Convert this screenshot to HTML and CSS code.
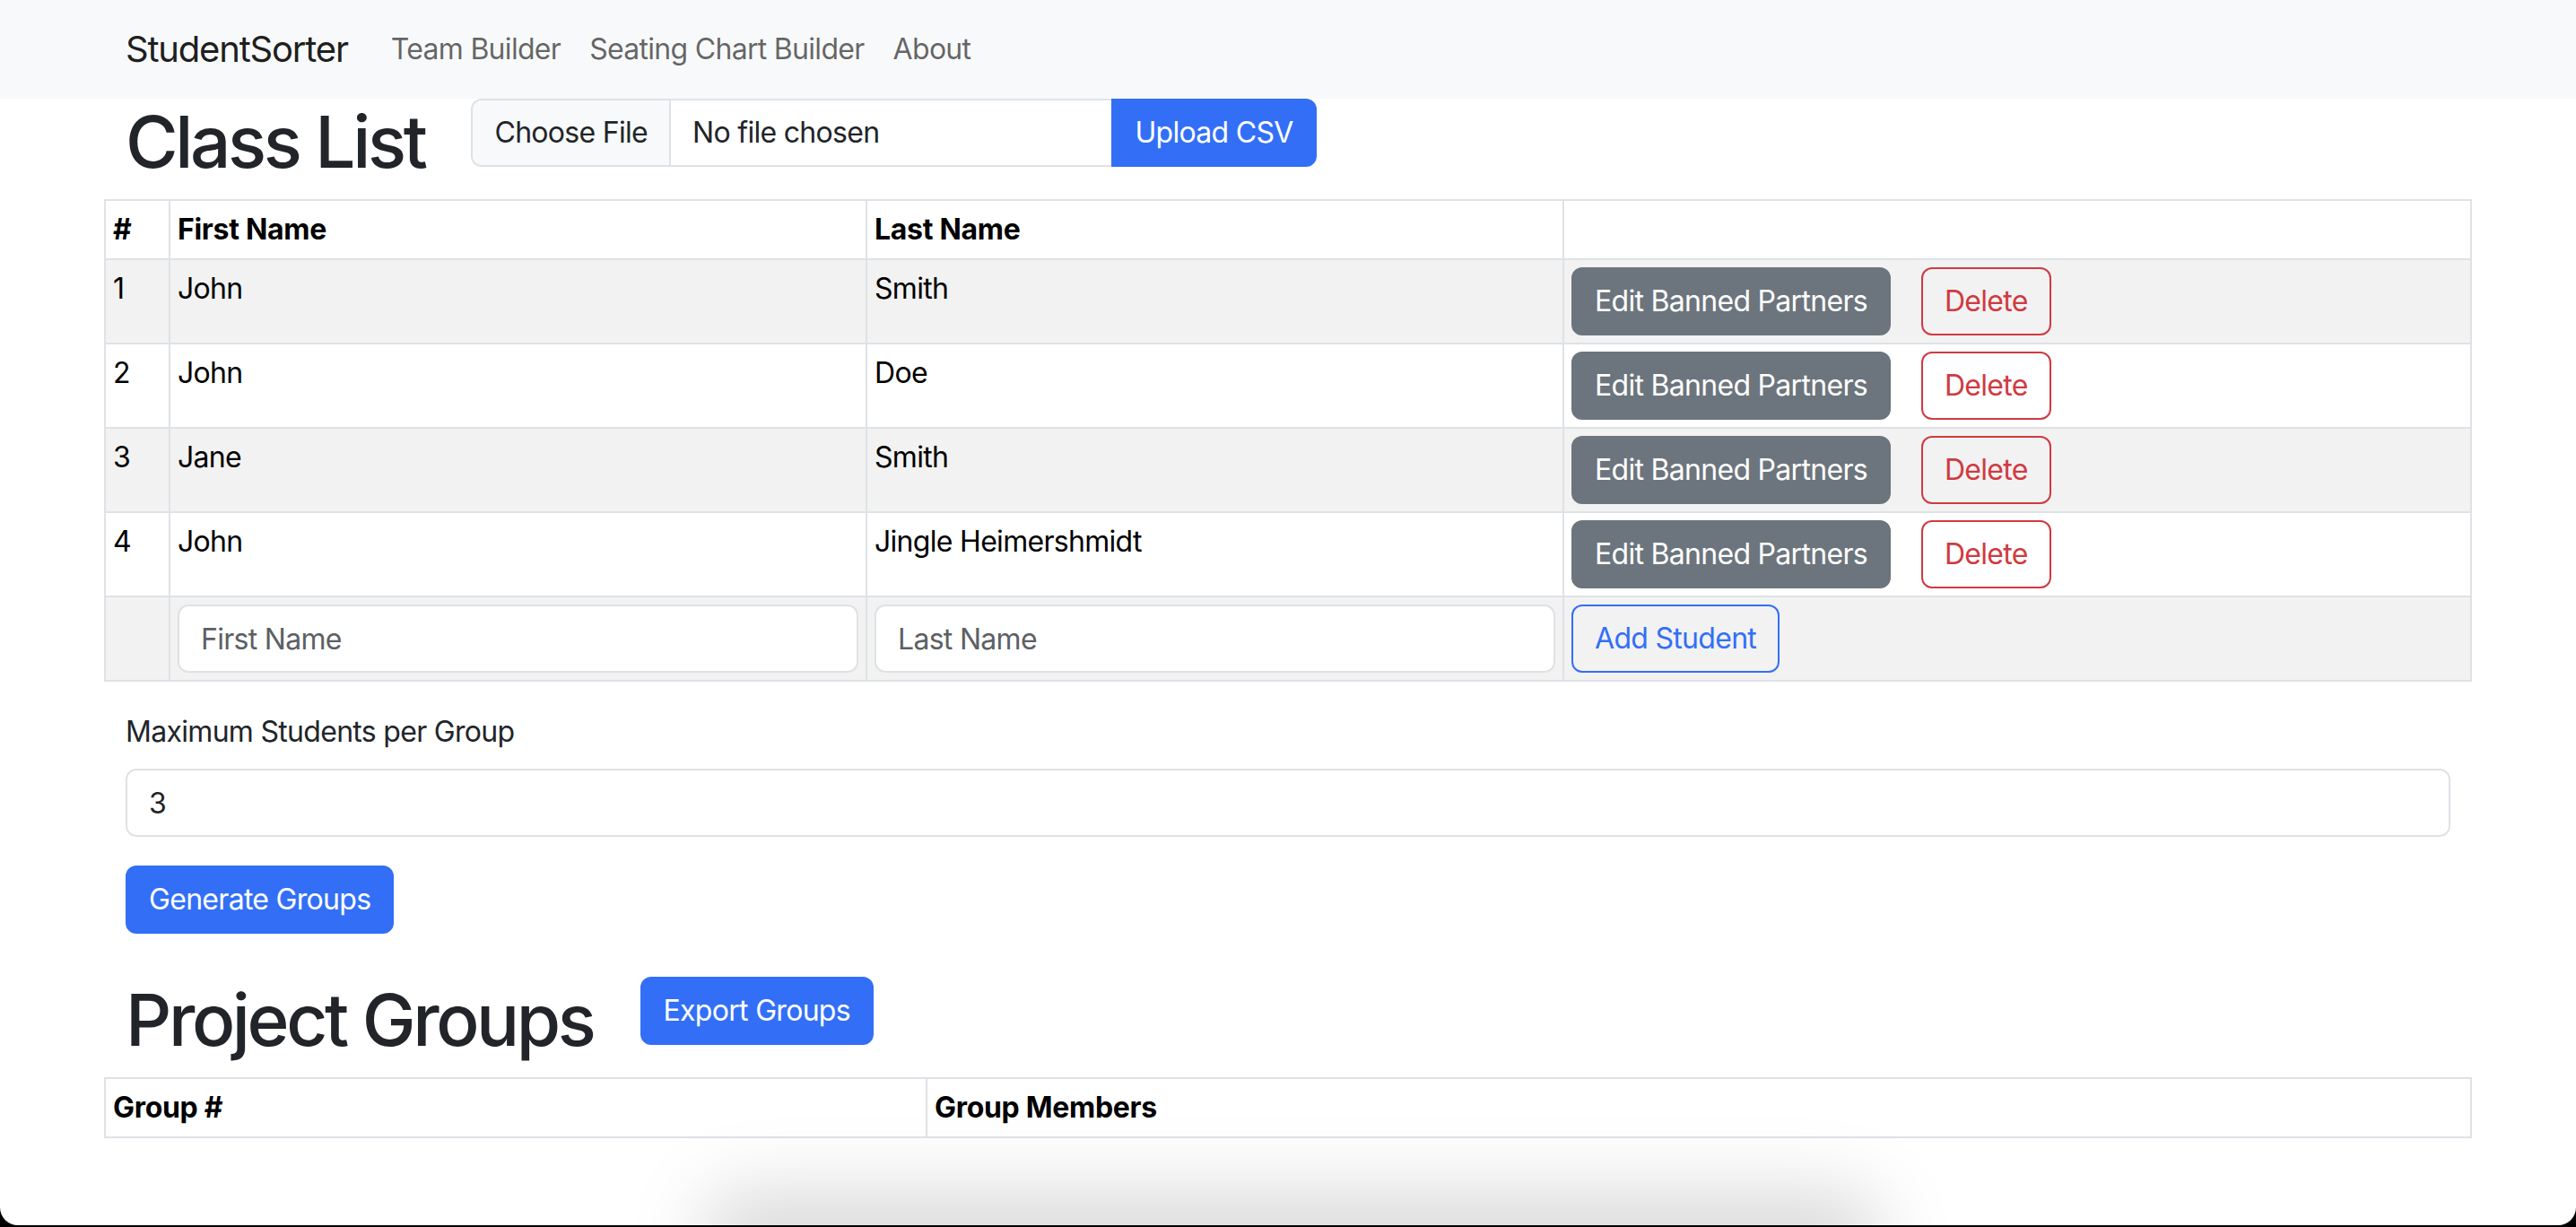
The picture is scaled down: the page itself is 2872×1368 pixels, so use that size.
FILE: index.html
```html
<!DOCTYPE html>
<html lang="en">
<head>
<meta charset="utf-8">
<title>StudentSorter</title>
<link rel="stylesheet" href="styles.css">
</head>
<body>
<div class="window">
  <nav class="navbar">
    <div class="container nav-inner">
      <a class="brand" href="#">StudentSorter</a>
      <ul class="nav-links">
        <li><a href="#">Team Builder</a></li>
        <li><a href="#">Seating Chart Builder</a></li>
        <li><a href="#">About</a></li>
      </ul>
    </div>
  </nav>

  <main class="container">
    <div class="title-row">
      <h1>Class List</h1>
      <form class="upload-group">
        <label class="file-input">
          <span class="file-btn">Choose File</span>
          <span class="file-name">No file chosen</span>
        </label>
        <button type="button" class="btn btn-primary btn-upload">Upload CSV</button>
      </form>
    </div>

    <table class="table table-bordered table-striped students">
      <thead>
        <tr>
          <th class="col-num">#</th>
          <th class="col-first">First Name</th>
          <th class="col-last">Last Name</th>
          <th class="col-actions"></th>
        </tr>
      </thead>
      <tbody>
        <tr>
          <td>1</td><td>John</td><td>Smith</td>
          <td><div class="actions"><button class="btn btn-secondary">Edit Banned Partners</button><button class="btn btn-outline-danger">Delete</button></div></td>
        </tr>
        <tr>
          <td>2</td><td>John</td><td>Doe</td>
          <td><div class="actions"><button class="btn btn-secondary">Edit Banned Partners</button><button class="btn btn-outline-danger">Delete</button></div></td>
        </tr>
        <tr>
          <td>3</td><td>Jane</td><td>Smith</td>
          <td><div class="actions"><button class="btn btn-secondary">Edit Banned Partners</button><button class="btn btn-outline-danger">Delete</button></div></td>
        </tr>
        <tr>
          <td>4</td><td>John</td><td>Jingle Heimershmidt</td>
          <td><div class="actions"><button class="btn btn-secondary">Edit Banned Partners</button><button class="btn btn-outline-danger">Delete</button></div></td>
        </tr>
        <tr>
          <td></td>
          <td><input class="form-control" type="text" placeholder="First Name"></td>
          <td><input class="form-control" type="text" placeholder="Last Name"></td>
          <td><button class="btn btn-outline-primary">Add Student</button></td>
        </tr>
      </tbody>
    </table>

    <div class="field">
      <label class="field-label" for="max">Maximum Students per Group</label>
      <input id="max" class="form-control" type="number" value="3">
    </div>
    <button class="btn btn-primary">Generate Groups</button>

    <div class="title-row groups-title">
      <h1>Project Groups</h1>
      <button class="btn btn-primary">Export Groups</button>
    </div>

    <table class="table table-bordered groups">
      <thead>
        <tr>
          <th class="col-group">Group #</th>
          <th>Group Members</th>
        </tr>
      </thead>
    </table>
  </main>

  <div class="dock-shadow"></div>
</div>
</body>
</html>
```

FILE: styles.css
```css
* {
  box-sizing: border-box;
}

html,
body {
  margin: 0;
  padding: 0;
  background: #000;
}

body {
  font-family: Inter, "Liberation Sans", Arial, sans-serif;
  font-size: 32px;
  line-height: 48px;
  letter-spacing: -0.7px;
  color: #212529;
}

.window {
  position: relative;
  height: 1366px;
  background: #fff;
  border-radius: 0 0 20px 20px;
  overflow: hidden;
}

.container {
  width: 2640px;
  margin: 0 auto;
  padding: 0 24px;
}

/* Navbar */
.navbar {
  background: #f8f9fa;
  height: 110px;
}

.nav-inner {
  display: flex;
  align-items: center;
  height: 100%;
}

.brand {
  font-size: 40px;
  line-height: 60px;
  color: rgba(0, 0, 0, 0.9);
  text-decoration: none;
  margin-right: 32px;
  letter-spacing: -1.2px;
}

.nav-links {
  display: flex;
  list-style: none;
  margin: 0;
  padding: 0;
}

.nav-links a {
  display: block;
  padding: 16px;
  color: rgba(0, 0, 0, 0.6);
  text-decoration: none;
}

/* Headings row */
.title-row {
  display: flex;
  align-items: flex-start;
  gap: 52px;
}

h1 {
  margin: 0 0 16px;
  font-size: 80px;
  line-height: 96px;
  font-weight: 500;
  color: #212529;
  letter-spacing: -3.4px;
}

.groups-title {
  margin-top: 48px;
}

/* Upload */
.upload-group {
  display: flex;
  margin: 0;
}

.file-input {
  display: flex;
  width: 714px;
  height: 76px;
  border: 2px solid #dee2e6;
  border-right: 0;
  border-radius: 12px 0 0 12px;
  overflow: hidden;
  background: #fff;
  line-height: 72px;
  color: #212529;
}

.file-btn {
  padding: 0 24px;
  background: #f8f9fa;
  border-right: 2px solid #dee2e6;
}

.file-name {
  padding: 0 24px;
}

/* Buttons */
.btn {
  display: inline-block;
  font-family: inherit;
  font-size: 32px;
  line-height: 48px;
  letter-spacing: -0.7px;
  padding: 12px 24px;
  border: 2px solid transparent;
  border-radius: 12px;
  background: transparent;
  cursor: pointer;
  white-space: nowrap;
}

.btn-primary {
  background: #336ff6;
  border-color: #336ff6;
  color: #fff;
}

.btn-secondary {
  background: #6c757d;
  border-color: #6c757d;
  color: #fff;
}

.btn-outline-danger {
  border-color: #d03a41;
  color: #d03a41;
}

.btn-outline-primary {
  border-color: #336ff6;
  color: #336ff6;
}

.btn-upload {
  border-radius: 0 12px 12px 0;
}

.actions {
  display: flex;
  gap: 34px;
}

/* Tables */
.table {
  width: calc(100% + 48px);
  margin: 0 -24px 32px;
  border-collapse: collapse;
  table-layout: fixed;
  color: #000;
}

.table th,
.table td {
  border: 2px solid #dee2e6;
  padding: 8px;
  text-align: left;
  vertical-align: top;
}

.table th {
  font-weight: 700;
  letter-spacing: -0.3px;
  vertical-align: bottom;
}

.table-striped tbody tr:nth-child(odd) td {
  background: #f2f2f2;
}

.col-num {
  width: 72px;
}

.col-first,
.col-last {
  width: 777px;
}

.col-group {
  width: 916px;
}

/* Form controls */
.form-control {
  display: block;
  width: 100%;
  height: 76px;
  padding: 12px 24px;
  font-family: inherit;
  font-size: 32px;
  line-height: 48px;
  letter-spacing: -0.7px;
  color: #212529;
  background: #fff;
  border: 2px solid #dee2e6;
  border-radius: 12px;
  -moz-appearance: textfield;
}

.form-control::placeholder {
  color: #5c6064;
}

.form-control::-webkit-inner-spin-button,
.form-control::-webkit-outer-spin-button {
  -webkit-appearance: none;
  margin: 0;
}

.field {
  margin-bottom: 32px;
}

.field-label {
  display: block;
  margin-top: 2px;
  margin-bottom: 17px;
  color: #212529;
}

/* decorative dock shadow at bottom edge */
.dock-shadow {
  position: absolute;
  left: 780px;
  width: 1320px;
  bottom: -70px;
  height: 110px;
  border-radius: 60px;
  background: rgba(0, 0, 0, 0.14);
  filter: blur(40px);
}
```
